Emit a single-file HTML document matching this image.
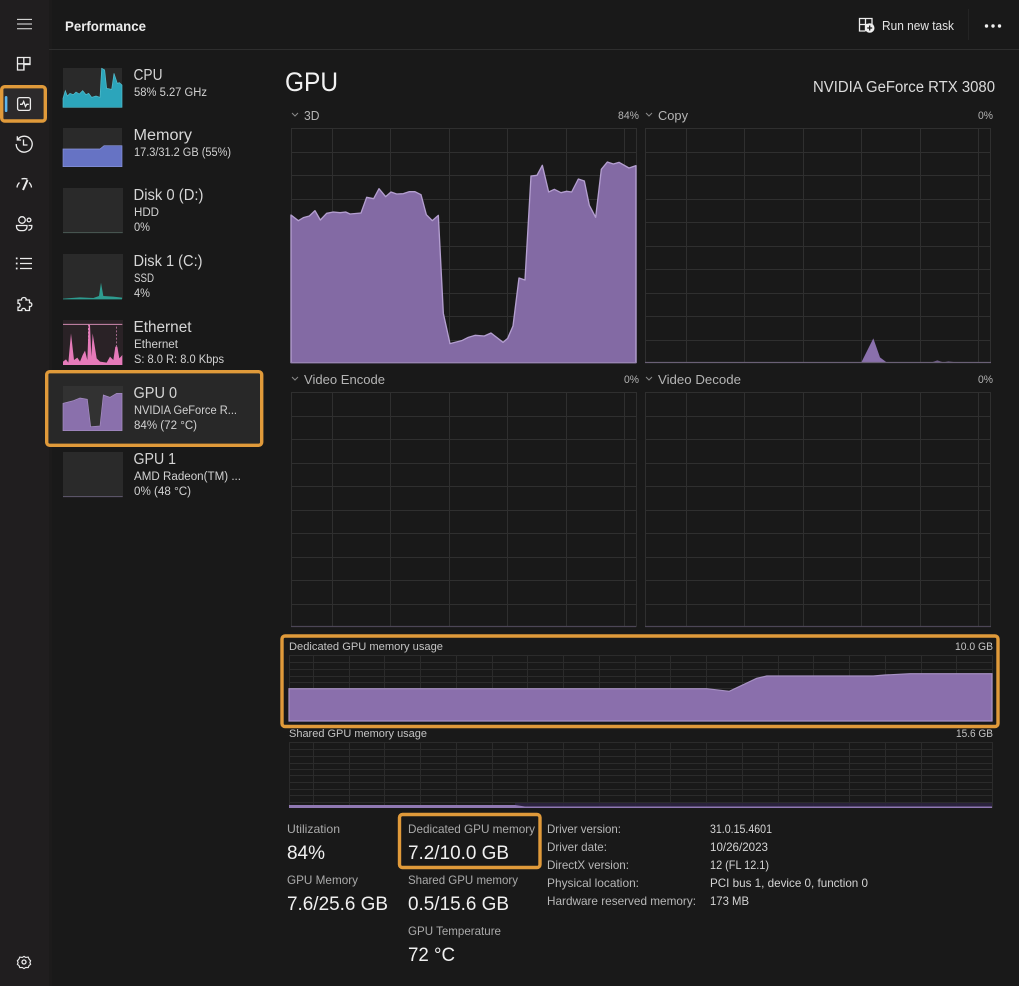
<!DOCTYPE html>
<html><head><meta charset="utf-8"><style>
html,body{margin:0;padding:0;background:#191919;width:1019px;height:986px;overflow:hidden}
svg{display:block}
text{font-family:"Liberation Sans",sans-serif;fill:#d8d8d8;font-size:12px}
.h{font-size:15.5px;fill:#d6d6d6}
.s{font-size:11.5px;fill:#d2d2d2}
.l{font-size:12px;fill:#aaa}
.c{font-size:12.5px;fill:#b4b4b4}
.p{font-size:11px;fill:#b4b4b4}
.m{font-size:11px;fill:#c4c4c4}
.b{font-size:19.5px;fill:#f0f0f0}
.d{font-size:12px;fill:#b8b8b8}
.v{font-size:12px;fill:#d4d4d4}
.i{fill:none;stroke:#ececec;stroke-width:1.3}
.g{stroke:#2f2f2f;stroke-width:1;fill:none}
.w{stroke:#2b2b2b;stroke-width:1;fill:none}
.o{fill:none;stroke:#e09a3a;stroke-width:3.4}
</style></head><body>
<svg width="1019" height="986" viewBox="0 0 1019 986" xmlns="http://www.w3.org/2000/svg" shape-rendering="geometricPrecision">
<rect width="1019" height="986" fill="#191919"/>
<rect width="49" height="986" fill="#201e1f"/>
<rect x="49" width="3" height="986" fill="#1c1b1b"/>
<rect x="49" y="49" width="970" height="1" fill="#2e2e2e"/>
<rect x="968" y="9" width="1" height="31" fill="#242424"/>

<!-- sidebar -->
<rect x="1.7" y="86.7" width="43.6" height="34.3" rx="3" fill="#2c2a2b"/>
<rect x="1.7" y="86.7" width="43.6" height="34.3" rx="3" class="o"/>
<rect x="4.8" y="96" width="2.6" height="16" rx="1.3" fill="#5cb5ee"/>
<path class="i" style="stroke-width:1" d="M17 19.4h15M17 24h15M17 28.7h15"/>
<path class="i" d="M17.5 57.5h12.500v7h-6v5.500h-6.500zM17.5 63.800h12.500M23.800 57.500v12.500"/>
<rect x="17.600" y="97.600" width="12.800" height="12.800" rx="2" class="i"/>
<path class="i" d="M20 104.300h2.200l1.500-2.800 1.800 5 1.300-2.200h2"/>
<path class="i" d="M17.700 139.500A8 8 0 1 1 16.200 144M17.300 136.200v3.800h3.800M23.500 139.500v5.500h4"/>
<path class="i" d="M17 187.500a7.800 7.800 0 0 1 2.500-5M21.500 179a9 9 0 0 1 6 .2M29 182.500a7.800 7.800 0 0 1 2.500 5"/>
<path d="M23 190l4.500-10" stroke="#ececec" stroke-width="2" fill="none"/>
<circle class="i" cx="22" cy="220" r="3.300"/><circle class="i" cx="29" cy="220" r="1.900"/>
<path class="i" d="M16.500 225.500h10.500v1.300a3.800 3.800 0 0 1-3.800 3.800h-2.900a3.800 3.800 0 0 1-3.800-3.800zM28.500 225.500h3.300v1.200a3.500 3.500 0 0 1-3.500 3.500"/>
<path class="i" d="M20 258.500h12M20 263.500h12M20 268.500h12"/>
<path d="M16.700 257.500v1.800M16.700 262.600v1.800M16.700 267.600v1.800" stroke="#ececec" stroke-width="1.700" fill="none"/>
<path class="i" d="M21.500 300h-3.500v3.300c2.800-.8 2.800 4.600 0 3.900v3.300h3.800c-1-2.800 4.400-2.800 3.700 0h4v-4c2.700 .9 3.500-4.300 0-3.800v-2.700h-3.500c1.200-3.300-5.200-3.300-4.500 0z"/>
<circle class="i" cx="24" cy="962" r="2"/>
<path class="i" d="M24 955.500l2 1.200 2.800-.4 1.100 2.500 1.600 1.700-.8 2 .8 2-1.800 1.400-.9 2.300-2.800-.2-2 1.300-2-1.300-2.800.2-.9-2.300-1.800-1.400.8-2-.8-2 1.600-1.700 1.100-2.500 2.800.4z" transform="translate(24 963) scale(.88) translate(-24 -963)"/>

<!-- header -->
<text x="65" y="31" font-size="14" font-weight="700" style="font-size:14px;fill:#ececec" textLength="81" lengthAdjust="spacingAndGlyphs">Performance</text>
<path class="i" d="M865.500 31h-6v-12.500h12.500v6M859.500 24.500h12.500M865.500 18.500v12.500"/>
<circle cx="869.700" cy="28" r="4.800" fill="#f0f0f0"/><path d="M869.700 25.500v5M867.200 28h5" stroke="#191919" stroke-width="1.300"/>
<text x="882" y="30" style="font-size:12.500px;fill:#e4e4e4" textLength="72" lengthAdjust="spacingAndGlyphs">Run new task</text>
<circle cx="986.500" cy="26" r="1.700" fill="#f0f0f0"/><circle cx="993" cy="26" r="1.700" fill="#f0f0f0"/><circle cx="999.500" cy="26" r="1.700" fill="#f0f0f0"/>

<!-- selected row -->
<rect x="46.700" y="371.700" width="215" height="73.600" rx="3" fill="#282828"/>
<rect x="46.700" y="371.700" width="215" height="73.600" rx="3" class="o"/>

<!-- thumbnails -->
<g fill="#2a2a2a">
<rect x="63" y="68" width="59" height="39"/><rect x="63" y="128" width="59" height="39"/>
<rect x="63" y="188" width="60" height="45"/><rect x="63" y="254" width="60" height="45"/>
<rect x="63" y="320" width="60" height="45" fill="#2a2226"/><rect x="63" y="386" width="60" height="45" fill="#323232"/>
<rect x="63" y="452" width="60" height="45"/>
</g>
<g transform="scale(.33333)">
<polygon fill="#2ca5bb" stroke="#55c0d0" stroke-width="2" points="189,322 189,295 196,272 202,288 210,280 220,284 228,276 238,282 248,272 258,284 266,280 275,292 288,288 300,292 305,205 314,210 320,265 335,268 342,220 352,250 358,248 366,255 366,322"/>
<polygon fill="#6673c4" stroke="#8a96dc" stroke-width="2" points="189,447 300,447 312,437 366,437 366,500 189,500"/>
<path d="M189 698H368" stroke="#4a5a55" stroke-width="3"/>
<polygon fill="#2e9c90" points="189,896 240,892 280,894 297,888 303,848 310,888 340,890 366,893 366,898 189,898"/>
</g>
<g transform="translate(0 310) scale(.33333)">
<path d="M189 43H367" stroke="#d08ab0" stroke-width="3"/>
<path d="M265 43V160M349 50V140" stroke="#d88ab8" stroke-width="2" stroke-dasharray="6 5"/>
<polygon fill="#e57ab9" points="189,165 189,155 198,148 205,158 213,70 222,150 232,143 240,155 248,135 255,122 262,150 266,45 270,45 274,140 278,70 290,145 300,155 320,158 330,140 340,150 346,110 352,110 358,145 367,135 367,165"/>
<polygon fill="#8a70ac" stroke="#a890c4" stroke-width="2" points="189,280 205,276 220,272 240,264 262,268 272,350 300,348 310,255 330,262 350,250 366,250 366,362 189,362"/>
<path d="M189 560H368" stroke="#625a70" stroke-width="3"/>
</g>

<!-- list text -->
<text class="h" x="133.500" y="80" textLength="29" lengthAdjust="spacingAndGlyphs">CPU</text>
<text class="s" x="134" y="96" textLength="73" lengthAdjust="spacingAndGlyphs">58%  5.27 GHz</text>
<text class="h" x="133.500" y="140" textLength="58.500" lengthAdjust="spacingAndGlyphs">Memory</text>
<text class="s" x="134" y="156" textLength="97" lengthAdjust="spacingAndGlyphs">17.3/31.2 GB (55%)</text>
<text class="h" x="133.500" y="200" textLength="70" lengthAdjust="spacingAndGlyphs">Disk 0 (D:)</text>
<text class="s" x="134" y="216" textLength="25" lengthAdjust="spacingAndGlyphs">HDD</text>
<text class="s" x="134" y="231" textLength="16" lengthAdjust="spacingAndGlyphs">0%</text>
<text class="h" x="133.500" y="266" textLength="69" lengthAdjust="spacingAndGlyphs">Disk 1 (C:)</text>
<text class="s" x="134" y="282" textLength="20" lengthAdjust="spacingAndGlyphs">SSD</text>
<text class="s" x="134" y="297" textLength="16" lengthAdjust="spacingAndGlyphs">4%</text>
<text class="h" x="133.500" y="332" textLength="58" lengthAdjust="spacingAndGlyphs">Ethernet</text>
<text class="s" x="134" y="348" textLength="44" lengthAdjust="spacingAndGlyphs">Ethernet</text>
<text class="s" x="134" y="363" textLength="90" lengthAdjust="spacingAndGlyphs">S: 8.0 R: 8.0 Kbps</text>
<text class="h" x="133.500" y="398" textLength="43.500" lengthAdjust="spacingAndGlyphs">GPU 0</text>
<text class="s" x="134" y="414" textLength="103" lengthAdjust="spacingAndGlyphs">NVIDIA GeForce R...</text>
<text class="s" x="134" y="429" textLength="63" lengthAdjust="spacingAndGlyphs">84%  (72 °C)</text>
<text class="h" x="133.500" y="464" textLength="42.500" lengthAdjust="spacingAndGlyphs">GPU 1</text>
<text class="s" x="134" y="480" textLength="107" lengthAdjust="spacingAndGlyphs">AMD Radeon(TM) ...</text>
<text class="s" x="134" y="495" textLength="57" lengthAdjust="spacingAndGlyphs">0%  (48 °C)</text>

<!-- titles -->
<text x="285" y="91" style="font-size:27px;fill:#f2f2f2" textLength="53" lengthAdjust="spacingAndGlyphs">GPU</text>
<text x="813" y="92" style="font-size:15.500px;fill:#dcdcdc" textLength="182" lengthAdjust="spacingAndGlyphs">NVIDIA GeForce RTX 3080</text>

<g fill="none" stroke="#8a8a8a" stroke-width="1">
<path d="M292 113l3 3 3-3M646 113l3 3 3-3M292 377l3 3 3-3M646 377l3 3 3-3"/>
</g>
<text class="c" x="304" y="120" textLength="15.500" lengthAdjust="spacingAndGlyphs">3D</text>
<text class="p" x="618" y="119" textLength="21" lengthAdjust="spacingAndGlyphs">84%</text>
<text class="c" x="658" y="120" textLength="30" lengthAdjust="spacingAndGlyphs">Copy</text>
<text class="p" x="978" y="119" textLength="15" lengthAdjust="spacingAndGlyphs">0%</text>
<text class="c" x="304" y="384" textLength="81" lengthAdjust="spacingAndGlyphs">Video Encode</text>
<text class="p" x="624" y="383" textLength="15" lengthAdjust="spacingAndGlyphs">0%</text>
<text class="c" x="658" y="384" textLength="83" lengthAdjust="spacingAndGlyphs">Video Decode</text>
<text class="p" x="978" y="383" textLength="15" lengthAdjust="spacingAndGlyphs">0%</text>

<!-- 4 grids -->
<defs>
<g id="gl"><path class="g" d="M291.500 128.500H636.500M291.500 152.500H636M291.500 175.500H636M291.500 199.500H636M291.500 222.500H636M291.500 246.500H636M291.500 269.500H636M291.500 293.500H636M291.500 316.500H636M291.500 340.500H636M291.500 128V363M332.500 128V363M390.500 128V363M449.500 128V363M507.500 128V363M566.500 128V363M624.500 128V363M636.500 128V363"/></g>
<g id="gr"><path class="g" d="M645.500 128.500H991M645.500 152.500H991M645.500 175.500H991M645.500 199.500H991M645.500 222.500H991M645.500 246.500H991M645.500 269.500H991M645.500 293.500H991M645.500 316.500H991M645.500 340.500H991M645.500 128V363M686.500 128V363M744.500 128V363M803.500 128V363M861.500 128V363M920.500 128V363M978.500 128V363M990.500 128V363"/></g>
<g id="wg"><path class="w" d="M313.500 0V66M349.500 0V66M384.500 0V66M420.500 0V66M456.500 0V66M492.500 0V66M527.500 0V66M563.500 0V66M599.500 0V66M635.500 0V66M670.500 0V66M706.500 0V66M742.500 0V66M778.500 0V66M813.500 0V66M849.500 0V66M885.500 0V66M921.500 0V66M956.500 0V66M992.500 0V66M289.500 0V66M289 .5H993M289 7.500H993M289 14.500H993M289 21.500H993M289 27.500H993M289 33.500H993M289 40.500H993M289 47.500H993M289 53.500H993M289 60.500H993"/></g>
</defs>
<use href="#gl"/><use href="#gr"/>
<use href="#gl" y="264"/><use href="#gr" y="264"/>

<!-- 3D -->
<g transform="translate(275 60) scale(.33333)">
<polygon fill="#836aa4" stroke="#b49fd0" stroke-width="4" stroke-linejoin="round" points="48,465 70,482 85,473 103,468 120,452 136,480 155,460 175,456 195,458 212,456 225,462 258,459 275,412 296,416 312,386 332,410 348,396 365,402 385,401 403,395 420,395 438,404 454,464 472,482 490,466 505,760 525,851 560,842 580,832 600,826 628,828 648,819 684,847 698,835 714,798 732,654 750,660 768,348 786,346 802,316 821,396 838,388 858,398 875,394 890,396 910,357 928,363 943,436 962,472 979,328 997,306 1015,312 1032,307 1062,324 1083,317 1083,908 48,908"/>
</g>
<path d="M291 363H636" stroke="#7c6a94" stroke-width="1"/>
<!-- Copy -->
<g transform="scale(.33333)">
<polygon fill="#8a70ac" points="2584,1087 2620,1015 2640,1072 2660,1087"/>
<polygon fill="#6f5c88" points="2795,1087 2812,1081 2830,1087 2845,1084 2870,1087"/>
</g>
<path d="M645 362.500H991" stroke="#6a6075" stroke-width="1.300"/>
<path d="M291 626.500H636M645 626.500H991" stroke="#4c4656" stroke-width="1.300"/>

<!-- dedicated -->
<use href="#wg" y="655"/>
<polygon fill="#8a6fac" stroke="#a791c4" stroke-width="1.200" points="289,688.700 706.700,688.700 729.300,691.300 756.700,678.300 766.700,676 873.300,676 885,675 910,673.700 992,673.700 992,721 289,721"/>
<rect x="282" y="636" width="716" height="90.500" rx="3" class="o"/>
<text class="m" x="289" y="650" textLength="154" lengthAdjust="spacingAndGlyphs">Dedicated GPU memory usage</text>
<text class="m" x="955" y="650" textLength="38" lengthAdjust="spacingAndGlyphs">10.0 GB</text>

<!-- shared -->
<text class="m" x="289" y="737" textLength="138" lengthAdjust="spacingAndGlyphs">Shared GPU memory usage</text>
<text class="m" x="956" y="737" textLength="37" lengthAdjust="spacingAndGlyphs">15.6 GB</text>
<use href="#wg" y="742"/>
<rect x="515" y="803" width="477" height="4" fill="#2c2440" opacity=".9"/>
<polygon fill="#8f78b2" points="289,805 515,805 525,806.500 992,806.500 992,808 289,808"/>

<!-- stats -->
<rect x="399.500" y="814.500" width="140.500" height="53" rx="3" class="o"/>
<text class="l" x="287" y="833" textLength="53" lengthAdjust="spacingAndGlyphs">Utilization</text>
<text class="b" x="287" y="859" textLength="38" lengthAdjust="spacingAndGlyphs">84%</text>
<text class="l" x="287" y="884" textLength="71" lengthAdjust="spacingAndGlyphs">GPU Memory</text>
<text class="b" x="287" y="910" textLength="101" lengthAdjust="spacingAndGlyphs">7.6/25.6 GB</text>
<text class="l" x="408" y="833" textLength="127" lengthAdjust="spacingAndGlyphs">Dedicated GPU memory</text>
<text class="b" x="408" y="859" textLength="101" lengthAdjust="spacingAndGlyphs">7.2/10.0 GB</text>
<text class="l" x="408" y="884" textLength="110" lengthAdjust="spacingAndGlyphs">Shared GPU memory</text>
<text class="b" x="408" y="910" textLength="101" lengthAdjust="spacingAndGlyphs">0.5/15.6 GB</text>
<text class="l" x="408" y="935" textLength="93" lengthAdjust="spacingAndGlyphs">GPU Temperature</text>
<text class="b" x="408" y="961" textLength="47" lengthAdjust="spacingAndGlyphs">72 °C</text>

<text class="d" x="547" y="833" textLength="74" lengthAdjust="spacingAndGlyphs">Driver version:</text>
<text class="v" x="710" y="833" textLength="62" lengthAdjust="spacingAndGlyphs">31.0.15.4601</text>
<text class="d" x="547" y="851" textLength="60" lengthAdjust="spacingAndGlyphs">Driver date:</text>
<text class="v" x="710" y="851" textLength="58" lengthAdjust="spacingAndGlyphs">10/26/2023</text>
<text class="d" x="547" y="869" textLength="82" lengthAdjust="spacingAndGlyphs">DirectX version:</text>
<text class="v" x="710" y="869" textLength="59" lengthAdjust="spacingAndGlyphs">12 (FL 12.1)</text>
<text class="d" x="547" y="887" textLength="92" lengthAdjust="spacingAndGlyphs">Physical location:</text>
<text class="v" x="710" y="887" textLength="158" lengthAdjust="spacingAndGlyphs">PCI bus 1, device 0, function 0</text>
<text class="d" x="547" y="905" textLength="149" lengthAdjust="spacingAndGlyphs">Hardware reserved memory:</text>
<text class="v" x="710" y="905" textLength="39" lengthAdjust="spacingAndGlyphs">173 MB</text>
</svg>
</body></html>
